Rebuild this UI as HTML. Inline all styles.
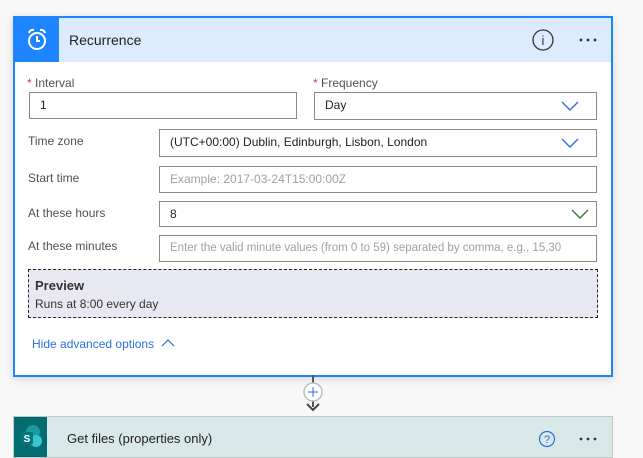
<!DOCTYPE html>
<html><head><style>
body{margin:0;width:643px;height:451px;background:#f8f8f8;font-family:"Segoe UI","Liberation Sans",sans-serif;position:relative;overflow:hidden;color:#323130}
.a{position:absolute}
.card{left:13px;top:16px;width:596px;height:357px;border:2px solid #1f85ff;background:#fff;box-shadow:0 2px 8px rgba(0,0,0,.15)}
.hdr{left:0;top:0;width:596px;height:44px;background:#dcebfd}
.ib{left:0;top:0;width:44px;height:44px;background:#1f85ff}
.lbl{font-size:12px;color:#505050}
.in{border:1px solid #8a8a8a;background:#fff;box-sizing:border-box;font-size:12px;padding-left:10px;line-height:24px;color:#222;white-space:nowrap;overflow:hidden}
.ph{color:#a0a0a0}
.st{color:#e0333b}
</style></head><body>
<div class="a card">
 <div class="a hdr">
  <div class="a ib"><svg width="44" height="44" viewBox="0 0 44 44"><g fill="none" stroke="#fff" stroke-width="2"><circle cx="22" cy="23" r="8"/><path d="M22 18v5h3"/><path d="M14 15a4 4 0 0 1 5-3M30 15a4 4 0 0 0-5-3"/></g></svg></div>
  <div class="a" style="left:54px;top:14px;font-size:14px;color:#222">Recurrence</div>
  <svg class="a" style="left:517px;top:11px" width="22" height="22"><circle cx="11" cy="11" r="10" fill="none" stroke="#333" stroke-width="1.3"/><text x="11" y="16" font-size="13" text-anchor="middle" fill="#333" font-family="Liberation Sans">i</text></svg>
  <svg class="a" style="left:562px;top:19px" width="22" height="6"><circle cx="4" cy="3" r="1.4" fill="#333"/><circle cx="11" cy="3" r="1.4" fill="#333"/><circle cx="18" cy="3" r="1.4" fill="#333"/></svg>
 </div>
</div>
<div class="a lbl" style="left:27px;top:76px"><span class="st">*</span> Interval</div>
<div class="a in" style="left:29px;top:92px;width:268px;height:27px">1</div>
<div class="a lbl" style="left:313px;top:76px"><span class="st">*</span> Frequency</div>
<div class="a in" style="left:314px;top:92px;width:283px;height:28px">Day</div>
<div class="a lbl" style="left:28px;top:134px">Time zone</div>
<div class="a in" style="left:159px;top:129px;width:438px;height:28px">(UTC+00:00) Dublin, Edinburgh, Lisbon, London</div>
<div class="a lbl" style="left:28px;top:171px">Start time</div>
<div class="a in ph" style="left:159px;top:166px;width:438px;height:27px">Example: 2017-03-24T15:00:00Z</div>
<div class="a lbl" style="left:28px;top:206px">At these hours</div>
<div class="a in" style="left:159px;top:201px;width:438px;height:26px">8</div>
<div class="a lbl" style="left:28px;top:239px">At these minutes</div>
<div class="a in ph" style="left:159px;top:235px;width:438px;height:27px;font-size:11.5px">Enter the valid minute values (from 0 to 59) separated by comma, e.g., 15,30</div>
<svg class="a" style="left:560px;top:100px" width="20" height="12"><path d="M2 2l8 8 8-8" fill="none" stroke="#2b6fe0" stroke-width="1.4"/></svg>
<svg class="a" style="left:560px;top:137px" width="20" height="12"><path d="M2 2l8 8 8-8" fill="none" stroke="#2b6fe0" stroke-width="1.4"/></svg>
<svg class="a" style="left:570px;top:208px" width="20" height="12"><path d="M2 2l8 8 8-8" fill="none" stroke="#3a7a3a" stroke-width="1.4"/></svg>
<div class="a" style="left:28px;top:269px;width:568px;height:47px;border:1px dashed #222;background:#e8e8f2"></div>
<div class="a" style="left:35px;top:278px;font-size:13px;font-weight:bold;color:#333">Preview</div>
<div class="a" style="left:35px;top:297px;font-size:12px;color:#333">Runs at 8:00 every day</div>
<div class="a" style="left:32px;top:337px;font-size:12px;color:#2b6fe0">Hide advanced options</div>
<svg class="a" style="left:161px;top:338px" width="14" height="10"><path d="M1 8l6-6 6 6" fill="none" stroke="#2b6fe0" stroke-width="1.2"/></svg>
<div class="a" style="left:312px;top:375px;width:2px;height:32px;background:#555"></div>
<svg class="a" style="left:302px;top:380px" width="24" height="36"><circle cx="11" cy="12" r="9" fill="#fff" stroke="#bbb" stroke-width="1.5"/><path d="M11 7v10M6 12h10" stroke="#2b6fe0" stroke-width="1"/><path d="M5 24l6 6 6-6" fill="none" stroke="#444" stroke-width="2"/></svg>
<div class="a" style="left:13px;top:416px;width:598px;height:40px;background:#d9e8e8;border:1px solid #c0c8c8"></div>
<div class="a" style="left:14px;top:417px;width:33px;height:40px;background:#036c70"></div>
<svg class="a" style="left:20px;top:424px" width="24" height="27"><circle cx="13" cy="8" r="7" fill="#1a9ba1"/><circle cx="16" cy="17" r="6" fill="#37c6d0"/><rect x="1" y="8" width="12" height="12" rx="1" fill="#03787c"/><text x="7" y="18" font-size="10" fill="#fff" text-anchor="middle" font-weight="bold" font-family="Liberation Sans">S</text></svg>
<div class="a" style="left:67px;top:431px;font-size:13px;color:#222">Get files (properties only)</div>
<svg class="a" style="left:538px;top:430px" width="18" height="18"><circle cx="9" cy="9" r="7.5" fill="none" stroke="#2b6fe0" stroke-width="1.2"/><text x="9" y="13" font-size="11" text-anchor="middle" fill="#2b6fe0" font-family="Liberation Sans">?</text></svg>
<svg class="a" style="left:577px;top:436px" width="22" height="6"><circle cx="4" cy="3" r="1.4" fill="#333"/><circle cx="11" cy="3" r="1.4" fill="#333"/><circle cx="18" cy="3" r="1.4" fill="#333"/></svg>
</body></html>
